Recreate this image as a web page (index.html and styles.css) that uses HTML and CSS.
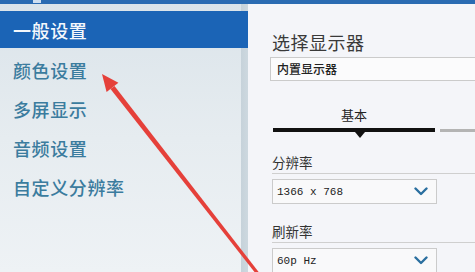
FILE: index.html
```html
<!DOCTYPE html>
<html lang="zh">
<head>
<meta charset="utf-8">
<link rel="stylesheet" href="styles.css">
</head>
<body>
<div class="topbar"><span class="tab"></span></div>
<div class="main">
  <nav class="sidebar">
    <div class="item selected">一般设置</div>
    <div class="item first">颜色设置</div>
    <div class="item">多屏显示</div>
    <div class="item">音频设置</div>
    <div class="item">自定义分辨率</div>
  </nav>
  <section class="panel">
    <h1 class="title">选择显示器</h1>
    <div class="input">内置显示器</div>
    <div class="tabs">
      <div class="tab-active">
        <span class="tab-label">基本</span>
        <span class="tab-bar"></span>
        <span class="tab-pointer"></span>
      </div>
      <span class="tab-rest"></span>
    </div>
    <div class="field-label">分辨率</div>
    <div class="select"><span class="select-text">1366 x 768</span>
      <svg class="chev" width="14" height="9" viewBox="0 0 14 9"><path d="M1.5 1.5 L7 7 L12.5 1.5" fill="none" stroke="#2b6f9f" stroke-width="2.4" stroke-linecap="round" stroke-linejoin="round"/></svg>
    </div>
    <div class="field-label second">刷新率</div>
    <div class="select"><span class="select-text">60p Hz</span>
      <svg class="chev" width="14" height="9" viewBox="0 0 14 9"><path d="M1.5 1.5 L7 7 L12.5 1.5" fill="none" stroke="#2b6f9f" stroke-width="2.4" stroke-linecap="round" stroke-linejoin="round"/></svg>
    </div>
  </section>
</div>
<svg class="arrow" width="475" height="272" viewBox="0 0 475 272">
  <polygon points="114.5,85.9 110.5,88.9 260,279 262.5,277" fill="#e5403a"/>
  <polygon points="102,74 106.6,92 118.4,82.8" fill="#e5403a"/>
</svg>
</body>
</html>
```
FILE: styles.css
```css
* { box-sizing: border-box; }
html, body { margin: 0; padding: 0; }
body {
  width: 475px;
  height: 272px;
  overflow: hidden;
  position: relative;
  font-family: "Noto Sans CJK SC", "Noto Sans", sans-serif;
  background: #f4f5f9;
}
.topbar {
  height: 4px;
  background: #2a6bb2;
  position: relative;
}
.tab {
  position: absolute;
  left: 33px;
  top: 0;
  width: 8px;
  height: 3px;
  background: #cfdff0;
}
.main {
  display: flex;
  height: 268px;
}
.sidebar {
  width: 248px;
  flex: none;
  padding-top: 7px;
  background:
    linear-gradient(to right, transparent 241px, #c6d2da 241px, #cdd8df 248px),
    linear-gradient(#dbe4ea, #e6ecf0 50%, #eef2f5);
}
.item {
  height: 39px;
  display: flex;
  align-items: center;
  padding-left: 13px;
  font-size: 18px;
  font-weight: 500;
  letter-spacing: 0.6px;
  color: #3b7c9e;
}
.item.selected {
  height: 37px;
  background: #1b64b6;
  color: #f4f8fc;
}
.item.first { margin-top: 2px; }
.panel {
  flex: 1;
  padding-left: 24px;
  padding-top: 24px;
  background: #f4f5f9;
  color: #333;
}
.title {
  margin: 0;
  font-size: 18px;
  font-weight: 400;
  line-height: 28px;
  color: #3a3a3a;
  letter-spacing: 0.5px;
}
.input {
  margin-top: 1px;
  margin-left: -2px;
  height: 24px;
  border: 1px solid #cbcbcb;
  border-right: none;
  background: #fbfbfc;
  font-size: 12px;
  line-height: 22px;
  padding-left: 6px;
  color: #222;
  font-weight: 500;
}
.tabs {
  display: flex;
  align-items: flex-start;
  margin-top: 25px;
  margin-left: 1px;
}
.tab-active {
  width: 162px;
  display: flex;
  flex-direction: column;
  align-items: center;
}
.tab-label {
  font-size: 13px;
  line-height: 17px;
  color: #222;
}
.tab-bar {
  margin-top: 5px;
  width: 162px;
  height: 4px;
  background: #111;
}
.tab-pointer {
  margin-left: 12px;
  width: 0;
  height: 0;
  border-left: 5px solid transparent;
  border-right: 5px solid transparent;
  border-top: 6px solid #111;
}
.tab-rest {
  margin-top: 23px;
  margin-left: 5px;
  flex: 1;
  height: 3px;
  background: #b4b4b4;
}
.field-label {
  margin-top: 15px;
  font-size: 13.5px;
  line-height: 18px;
  color: #333;
  padding-bottom: 2px;
  border-bottom: 1px solid #cfcfcf;
}
.field-label.second { margin-top: 18px; }
.select {
  margin-top: 5px;
  width: 165px;
  height: 25px;
  border: 1px solid #cbcbcb;
  background: #f9f9fa;
  display: flex;
  align-items: center;
  justify-content: space-between;
  padding: 0 8px 0 4px;
}
.select-text {
  font-family: "Liberation Mono", monospace;
  font-size: 11px;
  color: #222;
}
.chev { display: block; }
.arrow {
  position: absolute;
  left: 0;
  top: 0;
  pointer-events: none;
}
```
